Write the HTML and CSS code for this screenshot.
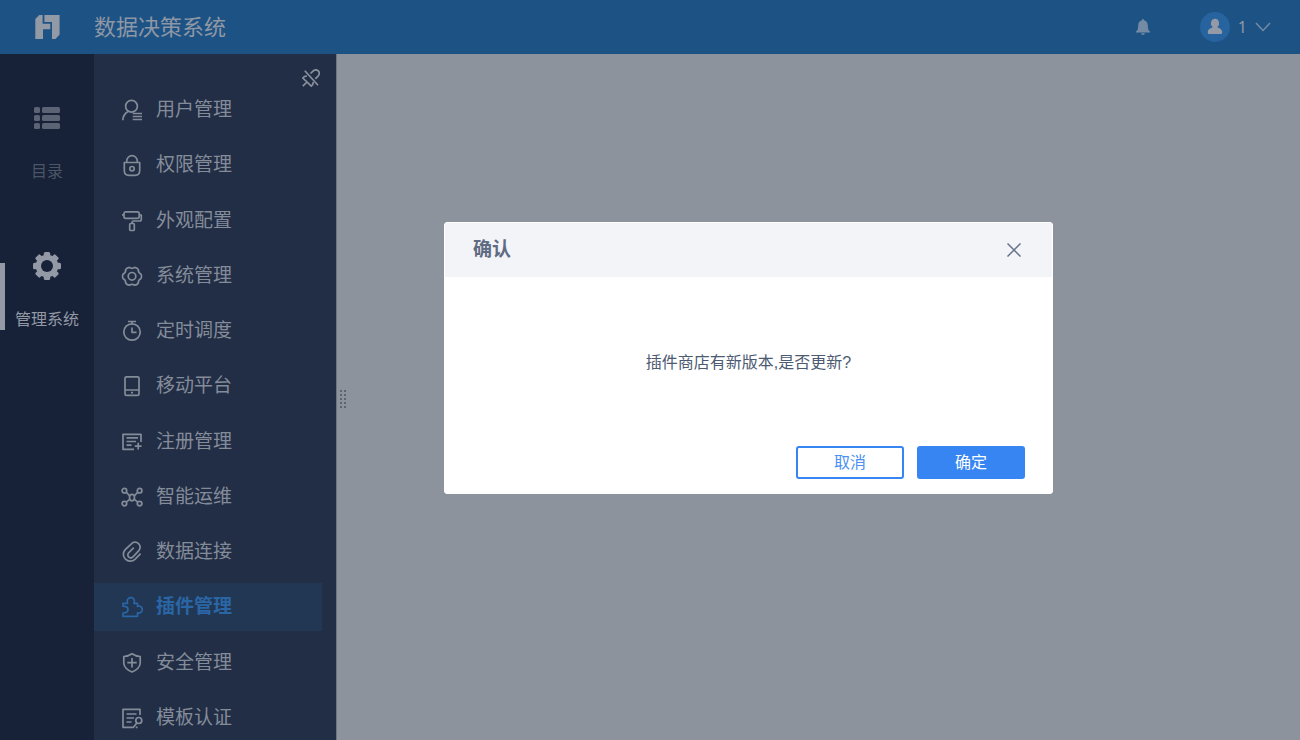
FILE: index.html
```html
<!DOCTYPE html>
<html lang="zh-CN">
<head>
<meta charset="utf-8">
<meta name="viewport" content="width=device-width, initial-scale=1">
<title>数据决策系统</title>
<link rel="stylesheet" href="styles.css">
</head>
<body>
<div class="app">
  <header class="topbar">
    <div class="brand-mark">
      <svg class="logo" viewBox="0 0 25 24" width="25" height="24" aria-hidden="true"><path d="M.3 4L4.300 0H7.600V8.800H15.300V14.300H8V24H.3Z"/><path d="M9.400 0H24.600V19.500L20.500 24H17V7H9.400Z"/></svg>
    </div>
    <h1 class="brand">数据决策系统</h1>
    <button class="icon-button bell" type="button" aria-label="消息">
      <svg viewBox="0 0 14 16" width="14" height="16" aria-hidden="true"><path d="M7 0Q8 0 8 1.200C10.800 1.900 11.800 4 11.800 6.500C11.800 10 12.500 11.500 14 12.500V13.500H0V12.500C1.500 11.500 2.200 10 2.200 6.500C2.200 4 3.200 1.900 6 1.200Q6 0 7 0ZM5 14.300H9Q8.700 16 7 16T5 14.300Z"/></svg>
    </button>
    <button class="user" type="button">
      <svg viewBox="0 0 30 30" width="30" height="30" aria-hidden="true"><circle class="avatar-bg" cx="15" cy="15" r="15"/><path class="avatar-fg" d="M15 6.800A4.300 4.500 0 0 1 17.500 14.800V15.600C20 16.400 22.200 17.500 22.200 20.500Q22.200 22 21 22H9Q7.800 22 7.800 20.500C7.800 17.500 10 16.400 12.500 15.600V14.800A4.300 4.500 0 0 1 15 6.800Z"/></svg>
      <span class="user-name">1</span>
      <svg class="chevron" viewBox="0 0 16 10" width="16" height="10" aria-hidden="true"><path d="M1 1L8 8.500L15 1"/></svg>
    </button>
  </header>

  <div class="workspace">
    <nav class="rail" aria-label="主导航">
      <a class="rail-item" href="#">
        <svg viewBox="0 0 28 28" width="28" height="28" aria-hidden="true"><rect x="1" y="3" width="6" height="6" rx="1.500"/><rect x="9" y="3" width="18" height="6" rx="1.500"/><rect x="1" y="11" width="6" height="6" rx="1.500"/><rect x="9" y="11" width="18" height="6" rx="1.500"/><rect x="1" y="19" width="6" height="6" rx="1.500"/><rect x="9" y="19" width="18" height="6" rx="1.500"/></svg>
        <span>目录</span>
      </a>
      <a class="rail-item rail-item-active" href="#" aria-current="page">
        <svg viewBox="-14 -14 28 28" width="28" height="28" aria-hidden="true"><g><rect x="-3.200" y="-14" width="6.400" height="28" rx="1.500"/><rect x="-3.200" y="-14" width="6.400" height="28" rx="1.500" transform="rotate(45)"/><rect x="-3.200" y="-14" width="6.400" height="28" rx="1.500" transform="rotate(90)"/><rect x="-3.200" y="-14" width="6.400" height="28" rx="1.500" transform="rotate(135)"/><circle r="11.300"/></g><circle class="gear-hole" r="6"/></svg>
        <span>管理系统</span>
      </a>
    </nav>

    <aside class="menu">
      <div class="menu-tools">
        <button class="icon-button" type="button" aria-label="取消固定">
          <svg class="line-icon" viewBox="0 0 18 18" width="18" height="18" aria-hidden="true"><path d="M2.800 1.800L16 16.300M8.500 4.500L11.300 1.800Q14 -.2 16.200 1.800T16.300 6.800L13.300 9.800M5 7Q2.500 6.800 .8 9L9.300 17.200Q11.500 15.500 11 13M.8 17.200L4.500 13.500"/></svg>
        </button>
      </div>
      <ul class="menu-list">
        <li><a class="menu-item" href="#"><svg class="line-icon" viewBox="0 1 22 24" width="22" height="24" aria-hidden="true"><circle cx="10.500" cy="9.300" r="5.900"/><path d="M1.800 23.300Q2 17.500 7 14.500M11.700 16.500H21M11.700 19.500H21M11.700 22.500H21"/></svg><span>用户管理</span></a></li>
        <li><a class="menu-item" href="#"><svg class="line-icon" viewBox="0 1 22 24" width="22" height="24" aria-hidden="true"><path d="M3.300 10.500H18.700V18.500Q18.700 23.300 14 23.300H8Q3.300 23.300 3.300 18.500ZM5.700 10.300V9A5.300 5.300 0 0 1 16.300 9V10.300"/><circle cx="11" cy="16.700" r="2.200"/></svg><span>权限管理</span></a></li>
        <li><a class="menu-item" href="#"><svg class="line-icon" viewBox="0 1 22 24" width="22" height="24" aria-hidden="true"><path d="M1 6.800H3M4.500 3.800H16.500Q18.200 3.800 18.200 5.500V8.500Q18.200 10.300 16.500 10.300H4.500Q3 10.300 3 8.500V5.500Q3 3.800 4.500 3.800ZM18.200 7H20.300V11.500Q20.300 13 18.500 13H12.500Q11 13 11 15.500"/><rect x="8.700" y="15.500" width="4.600" height="7" rx="1"/></svg><span>外观配置</span></a></li>
        <li><a class="menu-item" href="#"><svg class="line-icon" viewBox="0 1 22 24" width="22" height="24" aria-hidden="true"><path d="M20.100 11.200Q21 13.300 20.100 15.400Q17 16.800 17.300 20.100Q15.800 22 13.700 22.200Q11 20.400 8.300 22.200Q6.200 22 4.700 20.100Q5 16.800 1.900 15.400Q1.100 13.300 1.900 11.200Q5 9.800 4.700 6.500Q6.200 4.600 8.300 4.400Q11 6.200 13.700 4.400Q15.800 4.600 17.300 6.500Q17 9.800 20.100 11.200Z"/><circle cx="11" cy="13.300" r="3.800"/></svg><span>系统管理</span></a></li>
        <li><a class="menu-item" href="#"><svg class="line-icon" viewBox="0 1 22 24" width="22" height="24" aria-hidden="true"><circle cx="11" cy="14" r="8.200"/><path d="M7 3.500H15M11 3.500V5.800M11 9.500V14.300H15.500"/></svg><span>定时调度</span></a></li>
        <li><a class="menu-item" href="#"><svg class="line-icon" viewBox="0 1 22 24" width="22" height="24" aria-hidden="true"><rect x="4" y="3.800" width="14" height="18.600" rx="1.500"/><path d="M4 17H18M10 19.700H12"/></svg><span>移动平台</span></a></li>
        <li><a class="menu-item" href="#"><svg class="line-icon" viewBox="0 1 22 24" width="22" height="24" aria-hidden="true"><path d="M20 13V5.300H2V20.300H13M5.500 8.800H17M5.500 12.500H15M5.500 16.200H10.500M17.200 13.800V20.600M13.800 17.200H20.600"/></svg><span>注册管理</span></a></li>
        <li><a class="menu-item" href="#"><svg class="line-icon" viewBox="0 1 22 24" width="22" height="24" aria-hidden="true"><circle cx="3.400" cy="6.700" r="2.300"/><circle cx="18.600" cy="6.700" r="2.300"/><circle cx="3.400" cy="19.600" r="2.300"/><circle cx="18.600" cy="19.600" r="2.300"/><ellipse cx="11" cy="13.600" rx="2.500" ry="3.200"/><path d="M5.200 8.200L8.800 12M16.800 8.200L13.200 12M5.200 18.200L9 15.200M16.800 18.200L13 15.200"/></svg><span>智能运维</span></a></li>
        <li><a class="menu-item" href="#"><svg class="line-icon" viewBox="0 1 22 24" width="22" height="24" aria-hidden="true"><path d="M19.600 14.600L14 20.300A6.900 6.900 0 0 1 4.200 10.600L10.400 4.800A5 5 0 0 1 17.800 11.600L12 17.800A2.900 2.900 0 0 1 7.500 14L12.800 8.600"/></svg><span>数据连接</span></a></li>
        <li><a class="menu-item menu-item-active" href="#" aria-current="page"><svg class="line-icon" viewBox="0 1 22 24" width="22" height="24" aria-hidden="true"><path d="M2 9.300H6.700Q6.200 8.200 6.200 7.200A3.600 3.600 0 0 1 13.400 7.200Q13.400 8.200 12.900 9.300H16.500V12.300A3.500 3.500 0 1 1 16.500 18.800V22.300H2V19Q7 19 7 15.600T2 12.200Z"/></svg><span>插件管理</span></a></li>
        <li><a class="menu-item" href="#"><svg class="line-icon" viewBox="0 1 22 24" width="22" height="24" aria-hidden="true"><path d="M11 3.800Q14.500 6.300 19.200 6.500V13.500Q18.500 19 11 22Q3.500 19 2.800 13.500V6.500Q7.500 6.300 11 3.800ZM11 8V17.500M6.300 12.700H15.700"/></svg><span>安全管理</span></a></li>
        <li><a class="menu-item" href="#"><svg class="line-icon" viewBox="0 1 22 24" width="22" height="24" aria-hidden="true"><path d="M19 10V4.300H2V22.300H12.500L15.800 18M14.800 22.300H16.500M5.500 9H15.500M5.500 13H13M5.500 17H10.500"/><circle cx="17.800" cy="15.500" r="3"/></svg><span>模板认证</span></a></li>
      </ul>
    </aside>

    <main class="content">
      <svg class="grip" viewBox="0 0 6 18" width="6" height="18" aria-hidden="true"><path d="M1 0V18M5 0V18"/></svg>
    </main>
  </div>
</div>

<div class="dialog-layer">
  <section class="dialog" role="dialog" aria-modal="true" aria-labelledby="dialog-title">
    <div class="dialog-head">
      <h2 id="dialog-title">确认</h2>
      <button class="icon-button close" type="button" aria-label="关闭">
        <svg viewBox="0 0 14 14" width="14" height="14" aria-hidden="true"><path d="M.5 .5L13.500 13.500M13.500 .5L.5 13.500"/></svg>
      </button>
    </div>
    <p class="dialog-text">插件商店有新版本,是否更新?</p>
    <div class="dialog-actions">
      <button class="button" type="button">取消</button>
      <button class="button button-primary" type="button">确定</button>
    </div>
  </section>
</div>
</body>
</html>
```

FILE: styles.css
```css
* {
  box-sizing: border-box;
}

body {
  margin: 0;
  font-family: "Liberation Sans", "Noto Sans CJK SC", sans-serif;
  font-size: 16px;
  line-height: 24px;
  color: #8b929e;
}

h1,
h2,
p,
ul {
  margin: 0;
  padding: 0;
}

ul {
  list-style: none;
}

a {
  color: inherit;
  text-decoration: none;
}

button {
  font: inherit;
  color: inherit;
  cursor: pointer;
}

svg {
  display: block;
  flex: none;
}

.app {
  display: flex;
  flex-direction: column;
  height: 100vh;
  overflow: hidden;
}

.icon-button {
  padding: 0;
  border: 0;
  background: none;
}

.line-icon {
  fill: none;
  stroke: currentColor;
  stroke-width: 1.7;
  stroke-linejoin: round;
}

/* Top bar */
.topbar {
  display: flex;
  align-items: center;
  flex: none;
  height: 54px;
  padding-right: 29px;
  background: #1d5284;
  color: #8e97a5;
}

.brand-mark {
  display: flex;
  justify-content: center;
  width: 94px;
}

.logo {
  fill: #929aa6;
}

.brand {
  font-size: 22px;
  font-weight: 400;
  line-height: 32px;
  padding-top: 2px;
  margin-right: auto;
}

.bell {
  fill: #748ba5;
  margin-right: 50px;
}

.user {
  display: flex;
  align-items: center;
  gap: 8px;
  padding: 0;
  border: 0;
  background: none;
}

.user-name {
  font-family: "Noto Sans", sans-serif;
}

.avatar-bg {
  fill: #27639e;
}

.avatar-fg {
  fill: #949ba7;
}

.chevron {
  fill: none;
  stroke: #748ba5;
  stroke-width: 1.5;
}

/* Columns */
.workspace {
  display: flex;
  flex: 1;
  min-height: 0;
}

.rail {
  display: flex;
  flex-direction: column;
  flex: none;
  gap: 68px;
  width: 94px;
  padding-top: 50px;
  background: #172138;
}

.rail-item {
  position: relative;
  display: flex;
  flex-direction: column;
  align-items: center;
  gap: 28px;
  color: #4c5666;
  fill: #5a6474;
}

.rail-item-active {
  color: #939aa5;
  fill: #939aa5;
}

.rail-item-active::before {
  content: "";
  position: absolute;
  left: 0;
  top: 11px;
  bottom: 2px;
  width: 5px;
  background: #939aa5;
}

.gear-hole {
  fill: #172138;
}

.menu {
  display: flex;
  flex-direction: column;
  flex: none;
  width: 243px;
  border-right: 1px solid #6b7482;
  background: #222e46;
  overflow: hidden;
}

.menu-tools {
  display: flex;
  justify-content: flex-end;
  height: 32px;
  padding: 15px 16px 0 0;
}

.menu-list {
  display: flex;
  flex: 1;
  flex-direction: column;
  justify-content: space-between;
  margin: 0 14px -2px 0;
}

.menu-item {
  display: flex;
  align-items: center;
  gap: 13px;
  height: 48px;
  padding-left: 27px;
  font-size: 19px;
  color: #848c99;
}

.menu-item-active {
  background: #223754;
  color: #2a66a5;
  font-weight: 700;
}

.content {
  display: flex;
  align-items: center;
  flex: 1;
  padding: 3px 0 0 3px;
  background: #8d939d;
}

.grip {
  fill: none;
  stroke: #5c6474;
  stroke-width: 2;
  stroke-dasharray: 2 2;
}

/* Dialog */
.dialog-layer {
  position: fixed;
  inset: 0;
  display: grid;
  place-items: center;
  padding: 0 0 24px 197px;
}

.dialog {
  width: 609px;
  max-width: 100%;
  border: 1px solid #fff;
  border-radius: 3px;
  background: #fff;
  color: #4c5a72;
}

.dialog-head {
  display: flex;
  align-items: center;
  justify-content: space-between;
  height: 54px;
  padding: 0 31px 0 28px;
  background: #f2f4f8;
}

.dialog-head h2 {
  font-size: 19px;
  color: #5f6b82;
}

.close {
  fill: none;
  stroke: #66728a;
  stroke-width: 1.5;
}

.dialog-text {
  padding: 74px 28px 71px;
  text-align: center;
}

.dialog-actions {
  display: flex;
  justify-content: flex-end;
  gap: 13px;
  padding: 0 27px 14px;
}

.button {
  width: 108px;
  height: 33px;
  padding: 0;
  border: 2px solid #3685f2;
  border-radius: 3px;
  background: #fff;
  color: #4b90f3;
}

.button-primary {
  background: #3685f2;
  color: #fff;
}
```
